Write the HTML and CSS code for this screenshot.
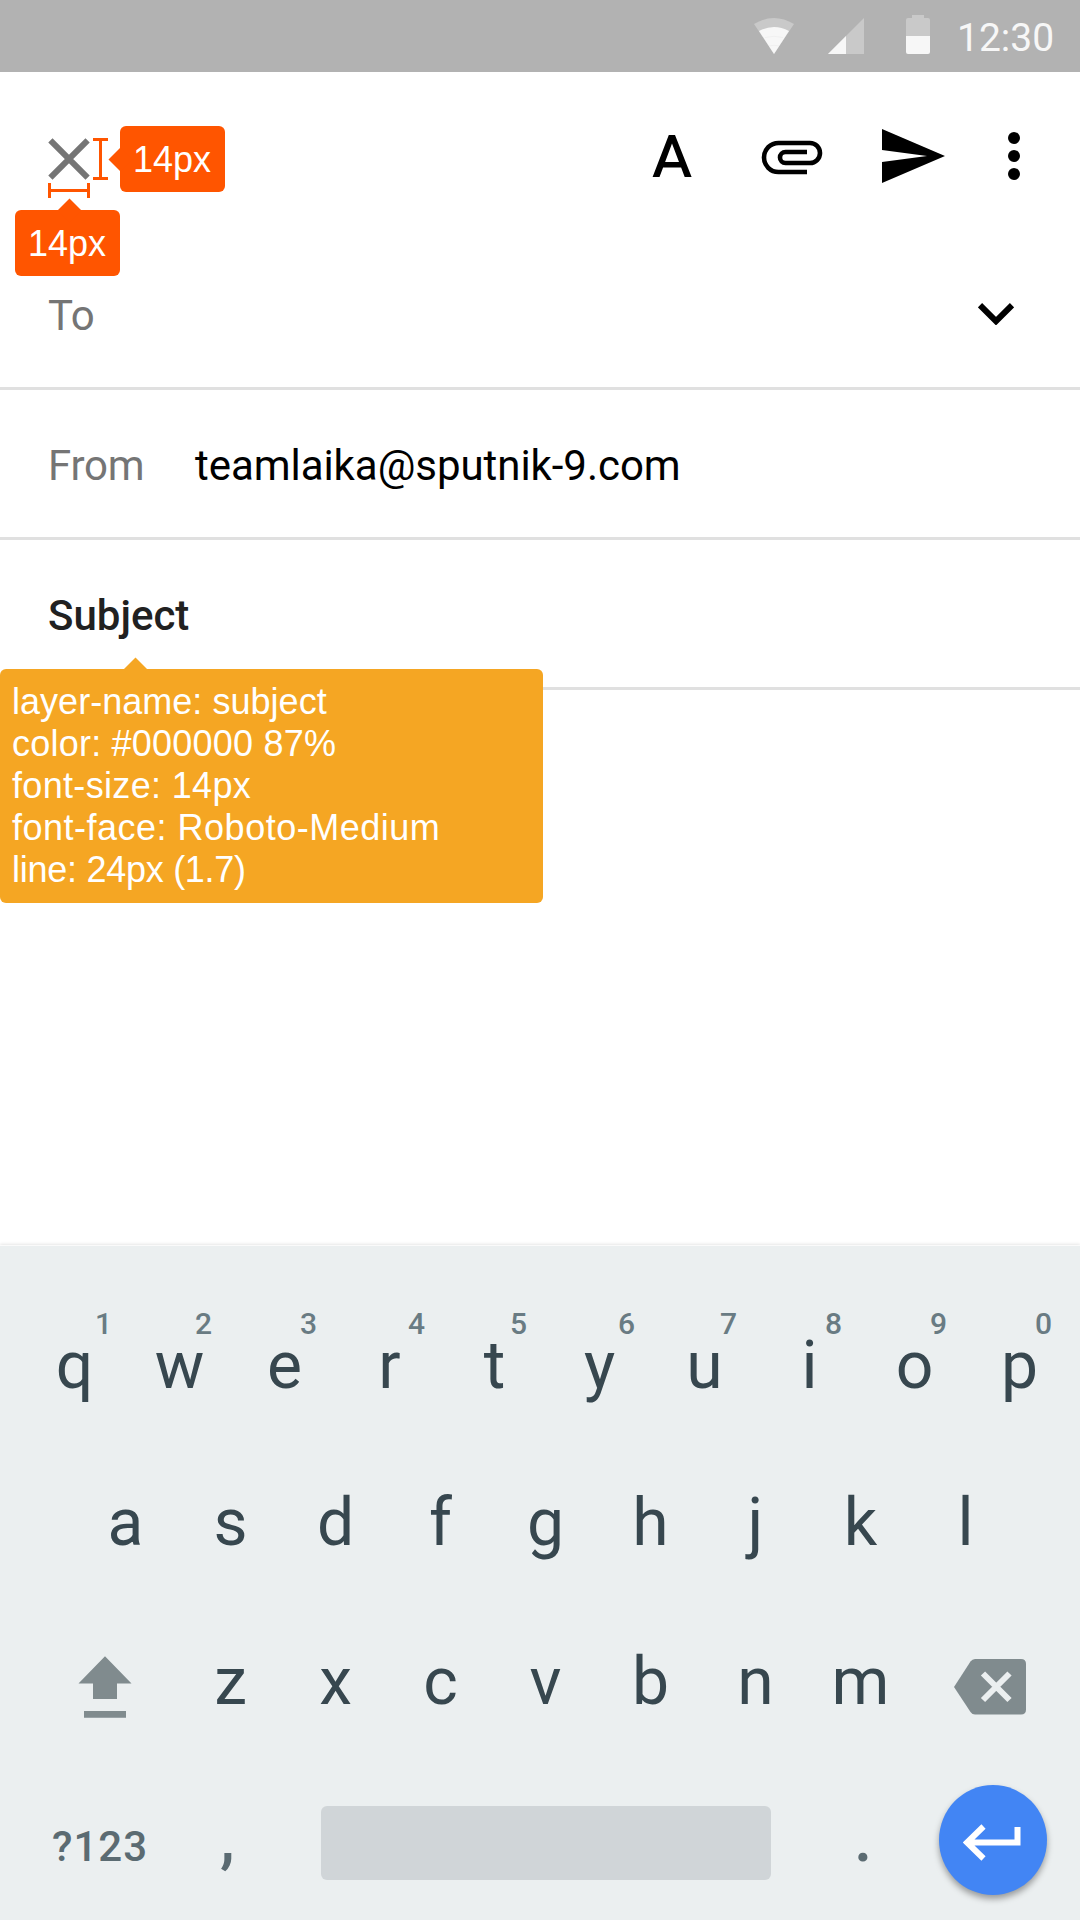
FILE: index.html
```html
<!DOCTYPE html>
<html lang="en">
<head>
<meta charset="utf-8">
<title>Compose</title>
<link rel="stylesheet" href="styles.css">
</head>
<body>
<header class="statusbar">
  <svg class="status-icons" width="240" height="72" viewBox="740 0 240 72">
    <path class="dim" d="M754 24Q774 12 794 24L774 54Z"/>
    <path class="lit" d="M759 31Q774 23 789 31L774 54Z"/>
    <path class="arc" d="M765 37.500Q774 35 783 37.500M769 46Q774 44.500 779 46"/>
    <path class="dim" d="M828 54L864 18V54Z"/>
    <path class="lit" d="M828 54L846 36V54Z"/>
    <path class="dim" d="M906 36V20q0-2 2-2h4v-3h12v3h4q2 0 2 2v16z"/>
    <path class="lit" d="M906 36h24v16q0 2-2 2h-20q-2 0-2-2z"/>
  </svg>
  <time class="clock">12:30</time>
</header>

<main class="compose">
  <div class="toolbar">
    <svg class="close" width="42" height="42" viewBox="0 0 42 42"><path d="M2.400 2.400L39.600 39.600M39.600 2.400L2.400 39.600"/></svg>
    <svg class="actions" width="376" height="60" viewBox="648 126 376 60">
      <path d="M652.600 177h6.900l3.600-9.500h18l3.600 9.500h6.900L675 135h-6.200zM665.100 162l6.900-18.500 7 18.500z" fill-rule="evenodd"/>
      <path class="clip" d="M807 172H778.500a14.500 14.500 0 0 1 0-29H810a10 10 0 0 1 0 20H785.500a5.500 5.500 0 0 1 0-11H807"/>
      <path d="M882 129L945 156 882 183V162L927 156 882 150Z"/>
      <circle cx="1014" cy="138" r="6"/><circle cx="1014" cy="156" r="6"/><circle cx="1014" cy="174" r="6"/>
    </svg>
    <div class="measure measure-h">
      <svg width="42" height="15" viewBox="0 0 42 15"><path d="M1.500 0V15M40.500 0V15M0 7.500H42"/></svg>
      <span class="tag tag-up">14px</span>
    </div>
    <div class="measure measure-v">
      <svg width="15" height="42" viewBox="0 0 15 42"><path d="M0 1.500H15M0 40.500H15M7.500 0V42"/></svg>
      <span class="tag tag-left">14px</span>
    </div>
  </div>
  <div class="field">
    <span class="label">To</span>
    <svg class="chevron" width="36" height="22" viewBox="0 0 36 22"><path d="M2 2.200L18 18.200 34 2.200"/></svg>
  </div>
  <div class="field">
    <span class="label">From</span>
    <span class="value">teamlaika@sputnik-9.com</span>
  </div>
  <div class="field subject">
    <span class="subject-text">Subject</span>
    <div class="spec">
      <span class="spec-name">layer-name: subject</span>
      <span class="spec-color">color: #000000 87%</span>
      <span class="spec-size">font-size: 14px</span>
      <span class="spec-face">font-face: Roboto-Medium</span>
      <span class="spec-line">line: 24px (1.7)</span>
    </div>
  </div>
</main>

<section class="keyboard">
  <div class="row row-top">
    <span class="key">q<sup class="one">1</sup></span><span class="key">w<sup>2</sup></span><span class="key">e<sup>3</sup></span><span class="key">r<sup class="wide">4</sup></span><span class="key">t<sup>5</sup></span><span class="key">y<sup class="wide">6</sup></span><span class="key">u<sup>7</sup></span><span class="key">i<sup>8</sup></span><span class="key">o<sup>9</sup></span><span class="key">p<sup>0</sup></span>
  </div>
  <div class="row row-home">
    <span class="key">a</span><span class="key">s</span><span class="key">d</span><span class="key">f</span><span class="key">g</span><span class="key">h</span><span class="key">j</span><span class="key">k</span><span class="key">l</span>
  </div>
  <div class="row row-low">
    <svg class="shift" width="54" height="63" viewBox="78 1656 54 63"><path d="M105 1656.300L131.500 1683.500H117V1699H93V1683.500H78.500ZM84 1711H126V1717.700H84Z"/></svg>
    <span class="key">z</span><span class="key">x</span><span class="key">c</span><span class="key">v</span><span class="key">b</span><span class="key">n</span><span class="key">m</span>
    <svg class="delete" width="72" height="56" viewBox="954 1659 72 56"><path d="M954 1687L970.500 1661.500Q972.300 1659 975 1659H1021Q1026 1659 1026 1664V1709.500Q1026 1714.500 1021 1714.500H975Q972.300 1714.500 970.500 1712Z"/><path class="cross" d="M983 1673.500L1009.500 1700M1009.500 1673.500L983 1700"/></svg>
  </div>
  <div class="row row-bottom">
    <span class="symbols">?123</span>
    <span class="punct comma">,</span>
    <span class="space"></span>
    <span class="punct dot">.</span>
    <span class="enter"><svg width="58" height="38" viewBox="963 1824 58 38"><path d="M983.500 1826.500L967 1842.500 983.500 1858.500M967 1842.500H1017.500V1827"/></svg></span>
  </div>
</section>
</body>
</html>
```
FILE: styles.css
```css
* { box-sizing: border-box; }
body { margin: 0; width: 1080px; height: 1920px; overflow: hidden; display: flex; flex-direction: column; background: #fff; font-family: Roboto, sans-serif; }
svg { display: block; flex: none; }

.statusbar { height: 72px; flex: none; background: #b2b2b2; display: flex; justify-content: flex-end; }
.status-icons { margin-right: -23px; }
.clock { width: 123px; line-height: 77px; font-size: 39px; color: #f7f7f7; }
.dim { fill: #c9c9c9; }
.lit { fill: #f7f7f7; }
.arc { fill: none; stroke: #ececec; stroke-width: .7; }

.compose { height: 1174px; flex: none; }
.toolbar { position: relative; height: 168px; display: flex; justify-content: space-between; padding: 54px 56px 0 48px; }
.close { margin-top: 12px; }
.close path { fill: none; stroke: #757575; stroke-width: 6; }
.clip { fill: none; stroke: #000; stroke-width: 4.600; }

.measure { position: absolute; display: flex; align-items: center; }
.measure path { fill: none; stroke: #ff5500; stroke-width: 3; }
.measure-h { left: 15px; top: 111px; flex-direction: column; gap: 12px; width: 105px; }
.measure-h svg { margin-left: 3px; }
.measure-v { left: 93px; top: 54px; height: 66px; gap: 12px; }
.tag { position: relative; width: 105px; height: 66px; padding-right: 1px; border-radius: 6px; background: #ff5500; color: #fff; font: 36px/68px "Liberation Sans", sans-serif; text-align: center; }
.tag::before { content: ""; position: absolute; width: 17px; height: 17px; background: #ff5500; transform: rotate(45deg); }
.tag-up::before { left: 45.500px; top: -8.500px; }
.tag-left::before { left: -8.500px; top: 24.500px; }

.field { position: relative; height: 150px; padding: 0 48px; display: flex; align-items: center; border-bottom: 3px solid #e0e0e0; font-size: 42px; }
.label { width: 147px; color: #757575; letter-spacing: -.2px; }
.label, .value, .subject-text { padding-top: 3px; }
.value { color: #000; letter-spacing: -.05px; }
.chevron { margin-left: 783px; }
.chevron path { fill: none; stroke: #000; stroke-width: 6; }
.subject-text { font-weight: 500; color: #212121; }

.spec { position: absolute; left: 0; top: 129px; width: 543px; height: 234px; padding: 12px; border-radius: 6px; background: #f5a623; color: #fff; display: flex; flex-direction: column; font: 36px/42px "Liberation Sans", sans-serif; white-space: nowrap; }
.spec::before { content: ""; position: absolute; left: 126.500px; top: -8.500px; width: 17px; height: 17px; background: #f5a623; transform: rotate(45deg); }
.spec-name { letter-spacing: .03px; }
.spec-color { letter-spacing: .22px; }
.spec-size { letter-spacing: .33px; }
.spec-face { letter-spacing: .5px; }
.spec-line { letter-spacing: -.27px; }

.keyboard { height: 674px; flex: none; background: #ebeff0; box-shadow: 0 -1px 0 #fafafa, 0 -2px 3px rgba(0,0,0,.1); padding-top: 82px; color: #37474f; }
.row { display: flex; height: 158px; font-size: 66px; line-height: 76px; }
.row-top { height: 157px; padding-left: 22px; }
.row-home { height: 159px; padding-left: 73px; }
.key { position: relative; width: 105px; flex: none; text-align: center; }
.key sup { position: absolute; left: 68px; top: -22px; font-size: 30px; line-height: 35px; font-weight: 500; color: #697b83; }
.key sup.one { left: 73px; }
.key sup.wide { left: 71px; }
.row-low { padding-left: 78px; }
.shift { margin: 12px 46px 0 0; fill: #808b8e; }
.delete { margin: 15px 0 0 41px; fill: #808b8e; }
.cross { fill: none; stroke: #ebeff0; stroke-width: 6; }

.row-bottom { height: 112px; color: #5b6b72; }
.symbols { margin-left: 52px; width: 168px; font-size: 42px; line-height: 89px; font-weight: 500; letter-spacing: 1px; }
.punct { font-weight: 500; font-size: 66px; line-height: 74px; }
.comma { width: 101px; }
.space { width: 450px; height: 74px; margin-top: 4px; border-radius: 6px; background: #d0d5d8; }
.dot { width: 168px; padding-left: 83px; }
.enter { width: 108px; height: 110px; margin-top: -17px; border-radius: 50%; background: #4285f4; box-shadow: 0 4px 6px rgba(0,0,0,.35); display: flex; align-items: center; justify-content: center; }
.enter svg { margin: 6px 2px 0 0; }
.enter path { fill: none; stroke: #fff; stroke-width: 6; }
```
